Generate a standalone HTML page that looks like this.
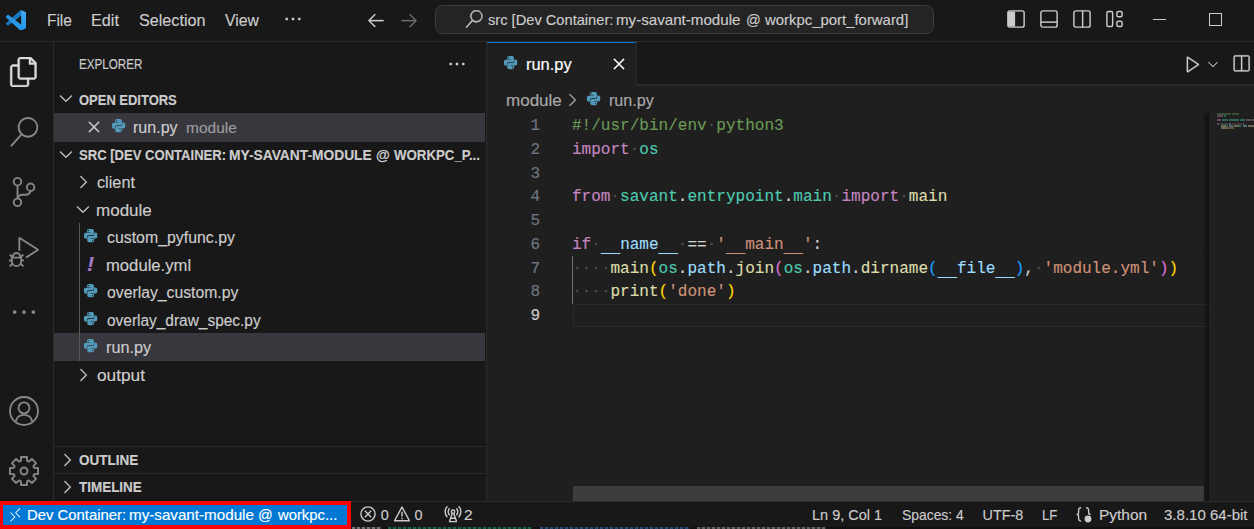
<!DOCTYPE html>
<html lang="en"><head><meta charset="utf-8"><title>run.py - src [Dev Container: my-savant-module @ workpc_port_forward] - Visual Studio Code</title>
<style>
html,body{margin:0;padding:0;background:#181818;overflow:hidden}
span,.code,.ln{-webkit-text-stroke:0.15px currentColor}
body{width:1254px;height:529px;position:relative;font-family:"Liberation Sans",sans-serif;color:#ccc;overflow:hidden}
#app{position:absolute;left:0;top:0;width:1254px;height:529px;overflow:hidden;background:#181818}
.code{position:absolute;white-space:pre;font-family:"Liberation Mono",monospace;font-size:16.04px;line-height:24px;height:24px;color:#d4d4d4}
.ws{background:radial-gradient(circle at 50% 44.5%,#474747 0,#474747 1px,rgba(71,71,71,0) 1.700px)}
.u{position:relative;top:2.500px}.k{color:#c586c0}.m{color:#4ec9b0}.f{color:#dcdcaa}.v{color:#9cdcfe}.s{color:#ce9178}.c{color:#6a9955}
.b1{color:#ffd700}.b2{color:#da70d6}.b3{color:#179fff}
.ln{position:absolute;font-family:"Liberation Mono",monospace;font-size:16.04px;line-height:24px;height:24px;color:#6e7681;text-align:right;width:40px}
</style></head><body><div id="app">
<div style="position:absolute;left:0px;top:0px;width:1254px;height:529px;background:#181818;"></div><div style="position:absolute;left:0px;top:41px;width:1254px;height:1px;background:#2b2b2b;"></div><div style="position:absolute;left:53px;top:42px;width:1px;height:459px;background:#2b2b2b;"></div><div style="position:absolute;left:487px;top:42px;width:767px;height:459px;background:#1f1f1f;"></div><div style="position:absolute;left:486px;top:42px;width:1px;height:459px;background:#2b2b2b;"></div><div style="position:absolute;left:487px;top:42px;width:767px;height:43px;background:#181818;"></div><div style="position:absolute;left:487px;top:84px;width:767px;height:2px;background:#292929;"></div><div style="position:absolute;left:487px;top:42px;width:150px;height:44px;background:#1f1f1f;"></div><div style="position:absolute;left:487px;top:42px;width:150px;height:1.25px;background:#0078d4;"></div><div style="position:absolute;left:636px;top:42px;width:1px;height:43.5px;background:#2b2b2b;"></div><svg style="position:absolute;left:5.9px;top:9.8px;" width="20.4" height="20.4" viewBox="0 0 100 100"><defs><linearGradient id="vsg" x1="0" y1="0" x2="0" y2="1"><stop offset="0" stop-color="#45aef5"/><stop offset="1" stop-color="#1f95ec"/></linearGradient></defs><path d="M96.5 10.8 75.9.9a6.200 6.200 0 0 0-7.100 1.200L29.400 38 12.200 25a4.200 4.200 0 0 0-5.300.200L1.400 30.300a4.200 4.200 0 0 0 0 6.200L16.300 50 1.400 63.600a4.200 4.200 0 0 0 0 6.200l5.500 5a4.200 4.200 0 0 0 5.300.200l17.200-13 39.400 36a6.200 6.200 0 0 0 7.100 1.200l20.600-9.900a6.200 6.200 0 0 0 3.500-5.600V16.400a6.200 6.200 0 0 0-3.500-5.600zM75 72.700 45.100 50 75 27.300z" fill="#1b79be" fill-rule="evenodd"/><path d="M1.400 30.300 6.900 25.200a4.200 4.200 0 0 1 5.300-.200L75 72.700V99.300a6.200 6.200 0 0 1-6.200-1.400L1.400 36.500a4.200 4.200 0 0 1 0-6.200z" fill="#2a97e6"/><path d="M75 0.900 96.500 10.800a6.200 6.200 0 0 1 3.500 5.600V83.600a6.200 6.200 0 0 1-3.500 5.600L75.900 99.100a6.200 6.200 0 0 1-.9.300z" fill="url(#vsg)"/></svg><span style="position:absolute;left:47.26px;top:6.00px;line-height:30px;height:30px;white-space:pre;font-family:'Liberation Sans',sans-serif;font-size:15.6px;color:#cccccc;transform:scaleX(0.9892);transform-origin:0 0;">File</span><span style="position:absolute;left:90.95px;top:6.00px;line-height:30px;height:30px;white-space:pre;font-family:'Liberation Sans',sans-serif;font-size:15.6px;color:#cccccc;transform:scaleX(1.0392);transform-origin:0 0;">Edit</span><span style="position:absolute;left:138.72px;top:6.00px;line-height:30px;height:30px;white-space:pre;font-family:'Liberation Sans',sans-serif;font-size:15.6px;color:#cccccc;transform:scaleX(1.0360);transform-origin:0 0;">Selection</span><span style="position:absolute;left:225.00px;top:6.00px;line-height:30px;height:30px;white-space:pre;font-family:'Liberation Sans',sans-serif;font-size:15.6px;color:#cccccc;transform:scaleX(1.0075);transform-origin:0 0;">View</span><svg style="position:absolute;left:282.75px;top:8.75px;" width="20" height="20" viewBox="0 0 16 16"><path d="M4 8a1 1 0 1 1-2 0 1 1 0 0 1 2 0zm5 0a1 1 0 1 1-2 0 1 1 0 0 1 2 0zm5 0a1 1 0 1 1-2 0 1 1 0 0 1 2 0z" fill="#cccccc" stroke="#cccccc" stroke-width="0.220"/></svg><svg style="position:absolute;left:366.25px;top:9.5px;" width="20" height="20" viewBox="0 0 16 16"><path d="M7 3.093l-5 5V8.8l5 5 .707-.707-4.146-4.147H14v-1H3.56L7.708 3.8 7 3.093z" fill="#cccccc" stroke="#cccccc" stroke-width="0.220"/></svg><svg style="position:absolute;left:399.25px;top:9.5px;" width="20" height="20" viewBox="0 0 16 16"><path d="M9 13.887l5-5V8.18l-5-5-.707.707 4.146 4.147H2v1h10.44L8.292 13.18l.707.707z" fill="#6e6e6e" stroke="#6e6e6e" stroke-width="0.220"/></svg><div style="position:absolute;left:435px;top:5px;width:497px;height:26.5px;background:#242424;border:1px solid #3c3c3c;border-radius:7.5px;box-sizing:content-box"></div><svg style="position:absolute;left:464.5px;top:9.6px;" width="18" height="18" viewBox="0 0 24 24"><path d="M15.25 0a8.25 8.25 0 0 0-6.18 13.72L1 22.88l1.12 1.12 8.05-9.12A8.251 8.251 0 1 0 15.25.01V0zm0 15a6.75 6.75 0 1 1 0-13.5 6.75 6.75 0 0 1 0 13.5z" fill="#c4c4c4" stroke="#c4c4c4" stroke-width="0.500"/></svg><span style="position:absolute;left:488.21px;top:5.00px;line-height:30px;height:30px;white-space:pre;font-family:'Liberation Sans',sans-serif;font-size:15.0px;color:#cccccc;transform:scaleX(0.9763);transform-origin:0 0;">src [Dev Container: </span><span style="position:absolute;left:616.19px;top:5.00px;line-height:30px;height:30px;white-space:pre;font-family:'Liberation Sans',sans-serif;font-size:15.0px;color:#cccccc;transform:scaleX(1.0086);transform-origin:0 0;">my-savant-module </span><span style="position:absolute;left:745.78px;top:5.00px;line-height:30px;height:30px;white-space:pre;font-family:'Liberation Sans',sans-serif;font-size:15.0px;color:#cccccc;transform:scaleX(0.9725);transform-origin:0 0;">@ </span><span style="position:absolute;left:765.40px;top:5.00px;line-height:30px;height:30px;white-space:pre;font-family:'Liberation Sans',sans-serif;font-size:15.0px;color:#cccccc;transform:scaleX(0.9934);transform-origin:0 0;">workpc_port_forward]</span><svg style="position:absolute;left:1006.3px;top:9px;" width="20" height="20" viewBox="0 0 16 16"><g fill="none" stroke="#cccccc" stroke-width="1.150"><rect x="1.5" y="1.500" width="13" height="13" rx="1.500"/><path d="M1.500 2v12h5.800v-12z" fill="#ccc" stroke="none"/></g></svg><svg style="position:absolute;left:1039.1px;top:9px;" width="20" height="20" viewBox="0 0 16 16"><g fill="none" stroke="#cccccc" stroke-width="1.150"><rect x="1.500" y="1.500" width="13" height="13" rx="1.500"/><path d="M1.500 10.500h13"/></g></svg><svg style="position:absolute;left:1071.5px;top:9px;" width="20" height="20" viewBox="0 0 16 16"><g fill="none" stroke="#cccccc" stroke-width="1.150"><rect x="1.500" y="1.500" width="13" height="13" rx="1.500"/><path d="M8.500 1.500v13"/></g></svg><svg style="position:absolute;left:1104.6px;top:9px;" width="20" height="20" viewBox="0 0 16 16"><g fill="none" stroke="#cccccc" stroke-width="1.150"><rect x="1.500" y="2" width="4.600" height="12" rx="1.200"/><rect x="9.500" y="2" width="4.200" height="4.200" rx="1.200"/><rect x="9.500" y="9.800" width="4.200" height="4.200" rx="1.200"/></g></svg><div style="position:absolute;left:1153px;top:19px;width:13px;height:1px;background:#cccccc;"></div><div style="position:absolute;left:1209px;top:13px;width:11px;height:11px;background:transparent;border:1px solid #ccc;box-sizing:content-box"></div><svg style="position:absolute;left:9px;top:57px;" width="30" height="30" viewBox="0 0 24 24"><path d="M17.5 0h-9L7 1.5V6H2.5L1 7.5v15.07L2.5 24h12.07L16 22.57V18h4.7l1.3-1.43V4.5L17.5 0zm0 2.12l2.38 2.38H17.5V2.12zm-3 20.38h-12v-15H7v9.07L8.5 18h6v4.5zm6-6h-12v-15H16V6h4.5v10.5z" fill="#dcdcdc" stroke="#dcdcdc" stroke-width="0.35"/></svg><svg style="position:absolute;left:9px;top:117px;" width="30" height="30" viewBox="0 0 24 24"><path d="M15.25 0a8.25 8.25 0 0 0-6.18 13.72L1 22.88l1.12 1.12 8.05-9.12A8.251 8.251 0 1 0 15.25.01V0zm0 15a6.75 6.75 0 1 1 0-13.5 6.75 6.75 0 0 1 0 13.5z" fill="#868686" /></svg><svg style="position:absolute;left:9px;top:177px;" width="30" height="30" viewBox="0 0 24 24"><path d="M21.007 8.222A3.738 3.738 0 0 0 15.045 5.2a3.737 3.737 0 0 0 1.156 6.583 2.988 2.988 0 0 1-2.668 1.67h-2.99a4.456 4.456 0 0 0-2.989 1.165V7.4a3.737 3.737 0 1 0-1.494 0v9.117a3.776 3.776 0 1 0 1.816.099 2.99 2.99 0 0 1 2.668-1.667h2.99a4.484 4.484 0 0 0 4.223-3.039 3.736 3.736 0 0 0 3.25-3.687zM4.565 3.738a2.242 2.242 0 1 1 4.484 0 2.242 2.242 0 0 1-4.484 0zm4.484 16.441a2.242 2.242 0 1 1-4.484 0 2.242 2.242 0 0 1 4.484 0zm8.221-9.715a2.242 2.242 0 1 1 0-4.485 2.242 2.242 0 0 1 0 4.485z" fill="#868686" /></svg><svg style="position:absolute;left:9px;top:237px;" width="30" height="30" viewBox="0 0 24 24"><path d="M10.94 13.5l-1.32 1.32a3.730 3.730 0 0 0-7.240 0L1.060 13.500 0 14.560l1.720 1.720-.220.220V18H0v1.500h1.500v.080c.077.489.214.966.410 1.420L0 22.940 1.060 24l1.650-1.650A4.308 4.308 0 0 0 6 24a4.310 4.310 0 0 0 3.290-1.650L10.940 24 12 22.940 10.090 21c.198-.464.336-.951.410-1.450v-.100H12V18h-1.500v-1.500l-.220-.220L12 14.560l-1.060-1.060zM6 13.500a2.250 2.250 0 0 1 2.250 2.250h-4.500A2.250 2.250 0 0 1 6 13.500zm3 6a3.330 3.330 0 0 1-3 3 3.330 3.330 0 0 1-3-3v-2.250h6v2.250zm14.760-9.900v1.260L13.500 17.370V15.600l8.500-5.370L9 2v9.460a5.070 5.070 0 0 0-1.500-.720V.630L8.640 0l15.120 9.600z" fill="#868686" /></svg><svg style="position:absolute;left:9px;top:297px;" width="30" height="30" viewBox="0 0 16 16"><path d="M4 8a1 1 0 1 1-2 0 1 1 0 0 1 2 0zm5 0a1 1 0 1 1-2 0 1 1 0 0 1 2 0zm5 0a1 1 0 1 1-2 0 1 1 0 0 1 2 0z" fill="#868686" /></svg><svg style="position:absolute;left:9px;top:396px;" width="30" height="30" viewBox="0 0 24 24"><g fill="none" stroke="#868686" stroke-width="1.500"><circle cx="12" cy="12" r="11.200"/><circle cx="12" cy="9.500" r="4.400"/><path d="M5.400 20.600c.600-3.600 3.300-5.500 6.600-5.500s6 1.900 6.600 5.500"/></g></svg><svg style="position:absolute;left:9px;top:456px;" width="30" height="30" viewBox="0 0 24 24"><g fill="none" stroke="#868686" stroke-width="1.550" stroke-linejoin="round"><path d="M9.49 3.88 L9.66 0.74 L14.34 0.74 L14.51 3.88 L15.97 4.48 L18.31 2.38 L21.62 5.69 L19.52 8.03 L20.12 9.49 L23.26 9.66 L23.26 14.34 L20.12 14.51 L19.52 15.97 L21.62 18.31 L18.31 21.62 L15.97 19.52 L14.51 20.12 L14.34 23.26 L9.66 23.26 L9.49 20.12 L8.03 19.52 L5.69 21.62 L2.38 18.31 L4.48 15.97 L3.88 14.51 L0.74 14.34 L0.74 9.66 L3.88 9.49 L4.48 8.03 L2.38 5.69 L5.69 2.38 L8.03 4.48Z"/><circle cx="12" cy="12" r="2.800"/></g></svg><span style="position:absolute;left:78.87px;top:49.00px;line-height:30px;height:30px;white-space:pre;font-family:'Liberation Sans',sans-serif;font-size:14px;color:#cccccc;transform:scaleX(0.8309);transform-origin:0 0;">EXPLORER</span><svg style="position:absolute;left:446.75px;top:54px;" width="20" height="20" viewBox="0 0 16 16"><path d="M4 8a1 1 0 1 1-2 0 1 1 0 0 1 2 0zm5 0a1 1 0 1 1-2 0 1 1 0 0 1 2 0zm5 0a1 1 0 1 1-2 0 1 1 0 0 1 2 0z" fill="#cccccc" stroke="#cccccc" stroke-width="0.220"/></svg><svg style="position:absolute;left:56.4px;top:88.4px;" width="20" height="20" viewBox="0 0 16 16"><path d="M7.976 10.072l4.357-4.357.62.618L8.284 11h-.618L3 6.333l.619-.618 4.357 4.357z" fill="#cccccc" stroke="#cccccc" stroke-width="0.220"/></svg><span style="position:absolute;left:79.04px;top:85.00px;line-height:30px;height:30px;white-space:pre;font-family:'Liberation Sans',sans-serif;font-size:14px;color:#cccccc;font-weight:700;transform:scaleX(0.9263);transform-origin:0 0;">OPEN EDITORS</span><div style="position:absolute;left:54px;top:113px;width:431px;height:28.5px;background:#37373d;"></div><svg style="position:absolute;left:84px;top:117.2px;" width="20" height="20" viewBox="0 0 16 16"><path d="M8 8.707l3.646 3.647.708-.707L8.707 8l3.647-3.646-.707-.708L8 7.293 4.354 3.646l-.707.708L7.293 8l-3.646 3.646.707.708L8 8.707z" fill="#cccccc" stroke="#cccccc" stroke-width="0.220"/></svg><svg style="position:absolute;left:111.0px;top:118.2px;" width="15.2" height="15.2" viewBox="0 0 16 16"><path d="M4.300 2.800Q4.300 1 6.200 1H9.600Q11.500 1 11.500 2.800V6Q11.500 7.650 9.700 7.650H6.100Q4.100 7.650 4.100 9.500V11.200H2.800Q1 11.200 1 9.300V6.700Q1 4.900 2.800 4.900H8V4.350H4.300ZM5.900 2.100a.650.650 0 1 1 0 1.300.650.650 0 0 1 0-1.300z" fill="#519aba" fill-rule="evenodd"/><g transform="rotate(180 8 8)"><path d="M4.300 2.800Q4.300 1 6.200 1H9.600Q11.500 1 11.500 2.800V6Q11.500 7.650 9.700 7.650H6.100Q4.100 7.650 4.100 9.500V11.200H2.800Q1 11.200 1 9.300V6.700Q1 4.900 2.800 4.900H8V4.350H4.300ZM5.900 2.100a.650.650 0 1 1 0 1.300.650.650 0 0 1 0-1.300z" fill="#519aba" fill-rule="evenodd"/></g></svg><span style="position:absolute;left:133.47px;top:113.00px;line-height:30px;height:30px;white-space:pre;font-family:'Liberation Sans',sans-serif;font-size:15.6px;color:#cccccc;transform:scaleX(1.0296);transform-origin:0 0;">run.py</span><span style="position:absolute;left:185.92px;top:113.00px;line-height:30px;height:30px;white-space:pre;font-family:'Liberation Sans',sans-serif;font-size:14.4px;color:#9d9d9d;transform:scaleX(1.0769);transform-origin:0 0;">module</span><svg style="position:absolute;left:56.4px;top:144.1px;" width="20" height="20" viewBox="0 0 16 16"><path d="M7.976 10.072l4.357-4.357.62.618L8.284 11h-.618L3 6.333l.619-.618 4.357 4.357z" fill="#cccccc" stroke="#cccccc" stroke-width="0.220"/></svg><span style="position:absolute;left:78.93px;top:140.00px;line-height:30px;height:30px;white-space:pre;font-family:'Liberation Sans',sans-serif;font-size:14px;color:#cccccc;font-weight:700;transform:scaleX(0.9329);transform-origin:0 0;">SRC [DEV CONTAINER: </span><span style="position:absolute;left:229.12px;top:140.00px;line-height:30px;height:30px;white-space:pre;font-family:'Liberation Sans',sans-serif;font-size:14px;color:#cccccc;font-weight:700;transform:scaleX(0.9847);transform-origin:0 0;">MY-SAVANT-MODULE </span><span style="position:absolute;left:375.64px;top:140.00px;line-height:30px;height:30px;white-space:pre;font-family:'Liberation Sans',sans-serif;font-size:14px;color:#cccccc;font-weight:700;transform:scaleX(1.0122);transform-origin:0 0;">@ </span><span style="position:absolute;left:394.20px;top:140.00px;line-height:30px;height:30px;white-space:pre;font-family:'Liberation Sans',sans-serif;font-size:14px;color:#cccccc;font-weight:700;transform:scaleX(0.9471);transform-origin:0 0;">WORKPC_P...</span><div style="position:absolute;left:54px;top:333.25px;width:431px;height:27.75px;background:#37373d;"></div><div style="position:absolute;left:79px;top:223px;width:1px;height:138px;background:#585858;"></div><svg style="position:absolute;left:72.5px;top:172.2px;" width="20" height="20" viewBox="0 0 16 16"><path d="M10.072 8.024L5.715 3.667l.618-.62L11 7.716v.618L6.333 13l-.618-.619 4.357-4.357z" fill="#cccccc" stroke="#cccccc" stroke-width="0.220"/></svg><span style="position:absolute;left:96.98px;top:168.00px;line-height:30px;height:30px;white-space:pre;font-family:'Liberation Sans',sans-serif;font-size:15.6px;color:#cccccc;transform:scaleX(1.0420);transform-origin:0 0;">client</span><svg style="position:absolute;left:72.5px;top:199.0px;" width="20" height="20" viewBox="0 0 16 16"><path d="M7.976 10.072l4.357-4.357.62.618L8.284 11h-.618L3 6.333l.619-.618 4.357 4.357z" fill="#cccccc" stroke="#cccccc" stroke-width="0.220"/></svg><span style="position:absolute;left:95.91px;top:196.00px;line-height:30px;height:30px;white-space:pre;font-family:'Liberation Sans',sans-serif;font-size:15.6px;color:#cccccc;transform:scaleX(1.0909);transform-origin:0 0;">module</span><svg style="position:absolute;left:83.4px;top:228.20000000000002px;" width="15.2" height="15.2" viewBox="0 0 16 16"><path d="M4.300 2.800Q4.300 1 6.200 1H9.600Q11.500 1 11.500 2.800V6Q11.500 7.650 9.700 7.650H6.100Q4.100 7.650 4.100 9.500V11.200H2.800Q1 11.200 1 9.300V6.700Q1 4.900 2.800 4.900H8V4.350H4.300ZM5.900 2.100a.650.650 0 1 1 0 1.300.650.650 0 0 1 0-1.300z" fill="#519aba" fill-rule="evenodd"/><g transform="rotate(180 8 8)"><path d="M4.300 2.800Q4.300 1 6.200 1H9.600Q11.500 1 11.500 2.800V6Q11.500 7.650 9.700 7.650H6.100Q4.100 7.650 4.100 9.500V11.200H2.800Q1 11.200 1 9.300V6.700Q1 4.900 2.800 4.900H8V4.350H4.300ZM5.900 2.100a.650.650 0 1 1 0 1.300.650.650 0 0 1 0-1.300z" fill="#519aba" fill-rule="evenodd"/></g></svg><span style="position:absolute;left:106.99px;top:223.00px;line-height:30px;height:30px;white-space:pre;font-family:'Liberation Sans',sans-serif;font-size:15.6px;color:#cccccc;transform:scaleX(1.0180);transform-origin:0 0;">custom_pyfunc.py</span><span style="position:absolute;left:87.38px;top:249.00px;line-height:30px;height:30px;white-space:pre;font-family:'Liberation Sans',sans-serif;font-size:19.5px;color:#a679cc;font-weight:700;transform:scaleX(1.0909);transform-origin:0 0;font-style:italic;">!</span><span style="position:absolute;left:105.93px;top:251.00px;line-height:30px;height:30px;white-space:pre;font-family:'Liberation Sans',sans-serif;font-size:15.6px;color:#cccccc;transform:scaleX(1.0675);transform-origin:0 0;">module.yml</span><svg style="position:absolute;left:83.4px;top:283.2px;" width="15.2" height="15.2" viewBox="0 0 16 16"><path d="M4.300 2.800Q4.300 1 6.200 1H9.600Q11.500 1 11.500 2.800V6Q11.500 7.650 9.700 7.650H6.100Q4.100 7.650 4.100 9.500V11.200H2.800Q1 11.200 1 9.300V6.700Q1 4.900 2.800 4.900H8V4.350H4.300ZM5.900 2.100a.650.650 0 1 1 0 1.300.650.650 0 0 1 0-1.300z" fill="#519aba" fill-rule="evenodd"/><g transform="rotate(180 8 8)"><path d="M4.300 2.800Q4.300 1 6.200 1H9.600Q11.500 1 11.500 2.800V6Q11.500 7.650 9.700 7.650H6.100Q4.100 7.650 4.100 9.500V11.200H2.800Q1 11.200 1 9.300V6.700Q1 4.900 2.800 4.900H8V4.350H4.300ZM5.900 2.100a.650.650 0 1 1 0 1.300.650.650 0 0 1 0-1.300z" fill="#519aba" fill-rule="evenodd"/></g></svg><span style="position:absolute;left:107.00px;top:278.00px;line-height:30px;height:30px;white-space:pre;font-family:'Liberation Sans',sans-serif;font-size:15.6px;color:#cccccc;transform:scaleX(1.0097);transform-origin:0 0;">overlay_custom.py</span><svg style="position:absolute;left:83.4px;top:310.7px;" width="15.2" height="15.2" viewBox="0 0 16 16"><path d="M4.300 2.800Q4.300 1 6.200 1H9.600Q11.500 1 11.500 2.800V6Q11.500 7.650 9.700 7.650H6.100Q4.100 7.650 4.100 9.500V11.200H2.800Q1 11.200 1 9.300V6.700Q1 4.900 2.800 4.900H8V4.350H4.300ZM5.900 2.100a.650.650 0 1 1 0 1.300.650.650 0 0 1 0-1.300z" fill="#519aba" fill-rule="evenodd"/><g transform="rotate(180 8 8)"><path d="M4.300 2.800Q4.300 1 6.200 1H9.600Q11.500 1 11.500 2.800V6Q11.500 7.650 9.700 7.650H6.100Q4.100 7.650 4.100 9.500V11.200H2.800Q1 11.200 1 9.300V6.700Q1 4.900 2.800 4.900H8V4.350H4.300ZM5.900 2.100a.650.650 0 1 1 0 1.300.650.650 0 0 1 0-1.300z" fill="#519aba" fill-rule="evenodd"/></g></svg><span style="position:absolute;left:106.50px;top:306.00px;line-height:30px;height:30px;white-space:pre;font-family:'Liberation Sans',sans-serif;font-size:15.6px;color:#cccccc;transform:scaleX(0.9903);transform-origin:0 0;">overlay_draw_spec.py</span><svg style="position:absolute;left:83.4px;top:338.2px;" width="15.2" height="15.2" viewBox="0 0 16 16"><path d="M4.300 2.800Q4.300 1 6.200 1H9.600Q11.500 1 11.500 2.800V6Q11.500 7.650 9.700 7.650H6.100Q4.100 7.650 4.100 9.500V11.200H2.800Q1 11.200 1 9.300V6.700Q1 4.900 2.800 4.900H8V4.350H4.300ZM5.900 2.100a.650.650 0 1 1 0 1.300.650.650 0 0 1 0-1.300z" fill="#519aba" fill-rule="evenodd"/><g transform="rotate(180 8 8)"><path d="M4.300 2.800Q4.300 1 6.200 1H9.600Q11.500 1 11.500 2.800V6Q11.500 7.650 9.700 7.650H6.100Q4.100 7.650 4.100 9.500V11.200H2.800Q1 11.200 1 9.300V6.700Q1 4.900 2.800 4.900H8V4.350H4.300ZM5.900 2.100a.650.650 0 1 1 0 1.300.650.650 0 0 1 0-1.300z" fill="#519aba" fill-rule="evenodd"/></g></svg><span style="position:absolute;left:105.96px;top:333.00px;line-height:30px;height:30px;white-space:pre;font-family:'Liberation Sans',sans-serif;font-size:15.6px;color:#cccccc;transform:scaleX(1.0414);transform-origin:0 0;">run.py</span><svg style="position:absolute;left:72.5px;top:364.7px;" width="20" height="20" viewBox="0 0 16 16"><path d="M10.072 8.024L5.715 3.667l.618-.62L11 7.716v.618L6.333 13l-.618-.619 4.357-4.357z" fill="#cccccc" stroke="#cccccc" stroke-width="0.220"/></svg><span style="position:absolute;left:96.95px;top:361.00px;line-height:30px;height:30px;white-space:pre;font-family:'Liberation Sans',sans-serif;font-size:15.6px;color:#cccccc;transform:scaleX(1.1053);transform-origin:0 0;">output</span><div style="position:absolute;left:54px;top:446px;width:432px;height:1px;background:#2b2b2b;"></div><div style="position:absolute;left:54px;top:473px;width:432px;height:1px;background:#2b2b2b;"></div><svg style="position:absolute;left:56.6px;top:449.8px;" width="20" height="20" viewBox="0 0 16 16"><path d="M10.072 8.024L5.715 3.667l.618-.62L11 7.716v.618L6.333 13l-.618-.619 4.357-4.357z" fill="#cccccc" stroke="#cccccc" stroke-width="0.220"/></svg><span style="position:absolute;left:78.77px;top:445.00px;line-height:30px;height:30px;white-space:pre;font-family:'Liberation Sans',sans-serif;font-size:14px;color:#cccccc;font-weight:700;transform:scaleX(0.9628);transform-origin:0 0;">OUTLINE</span><svg style="position:absolute;left:56.6px;top:477.3px;" width="20" height="20" viewBox="0 0 16 16"><path d="M10.072 8.024L5.715 3.667l.618-.62L11 7.716v.618L6.333 13l-.618-.619 4.357-4.357z" fill="#cccccc" stroke="#cccccc" stroke-width="0.220"/></svg><span style="position:absolute;left:79.25px;top:472.00px;line-height:30px;height:30px;white-space:pre;font-family:'Liberation Sans',sans-serif;font-size:14px;color:#cccccc;font-weight:700;transform:scaleX(0.9614);transform-origin:0 0;">TIMELINE</span><svg style="position:absolute;left:503.29999999999995px;top:55.3px;" width="15.2" height="15.2" viewBox="0 0 16 16"><path d="M4.300 2.800Q4.300 1 6.200 1H9.600Q11.500 1 11.500 2.800V6Q11.500 7.650 9.700 7.650H6.100Q4.100 7.650 4.100 9.500V11.200H2.800Q1 11.200 1 9.300V6.700Q1 4.900 2.800 4.900H8V4.350H4.300ZM5.900 2.100a.650.650 0 1 1 0 1.300.650.650 0 0 1 0-1.300z" fill="#519aba" fill-rule="evenodd"/><g transform="rotate(180 8 8)"><path d="M4.300 2.800Q4.300 1 6.200 1H9.600Q11.500 1 11.500 2.800V6Q11.500 7.650 9.700 7.650H6.100Q4.100 7.650 4.100 9.500V11.200H2.800Q1 11.200 1 9.300V6.700Q1 4.900 2.800 4.900H8V4.350H4.300ZM5.900 2.100a.650.650 0 1 1 0 1.300.650.650 0 0 1 0-1.300z" fill="#519aba" fill-rule="evenodd"/></g></svg><span style="position:absolute;left:525.70px;top:50.00px;line-height:30px;height:30px;white-space:pre;font-family:'Liberation Sans',sans-serif;font-size:15.6px;color:#ffffff;transform:scaleX(1.0533);transform-origin:0 0;">run.py</span><svg style="position:absolute;left:608.5px;top:54.1px;" width="20" height="20" viewBox="0 0 16 16"><path d="M8 8.707l3.646 3.647.708-.707L8.707 8l3.647-3.646-.707-.708L8 7.293 4.354 3.646l-.707.708L7.293 8l-3.646 3.646.707.708L8 8.707z" fill="#ffffff" stroke="#ffffff" stroke-width="0.220"/></svg><svg style="position:absolute;left:1183px;top:54px;" width="20" height="20" viewBox="0 0 16 16"><path d="M3.78 2L3 2.41v12l.78.42 9-6V8l-9-6zM4 13.48V3.35l7.600 5.070L4 13.480z" fill="#cccccc" stroke="#cccccc" stroke-width="0.220"/></svg><svg style="position:absolute;left:1205.3px;top:55.5px;" width="16" height="16" viewBox="0 0 16 16"><path d="M7.976 10.072l4.357-4.357.62.618L8.284 11h-.618L3 6.333l.619-.618 4.357 4.357z" fill="#cccccc" /></svg><svg style="position:absolute;left:1231.2px;top:54px;" width="20" height="20" viewBox="0 0 16 16"><path d="M14 1H3L2 2v11l1 1h11l1-1V2l-1-1zM8 13H3V2h5v11zm6 0H9V2h5v11z" fill="#cccccc" stroke="#cccccc" stroke-width="0.220"/></svg><span style="position:absolute;left:505.71px;top:86.00px;line-height:30px;height:30px;white-space:pre;font-family:'Liberation Sans',sans-serif;font-size:15.6px;color:#a9a9a9;transform:scaleX(1.0909);transform-origin:0 0;">module</span><svg style="position:absolute;left:562px;top:90px;" width="20" height="20" viewBox="0 0 16 16"><path d="M10.072 8.024L5.715 3.667l.618-.62L11 7.716v.618L6.333 13l-.618-.619 4.357-4.357z" fill="#a9a9a9" stroke="#a9a9a9" stroke-width="0.220"/></svg><svg style="position:absolute;left:585.6999999999999px;top:91.4px;" width="15.2" height="15.2" viewBox="0 0 16 16"><path d="M4.300 2.800Q4.300 1 6.200 1H9.600Q11.500 1 11.500 2.800V6Q11.500 7.650 9.700 7.650H6.100Q4.100 7.650 4.100 9.500V11.200H2.800Q1 11.200 1 9.300V6.700Q1 4.900 2.800 4.900H8V4.350H4.300ZM5.900 2.100a.650.650 0 1 1 0 1.300.650.650 0 0 1 0-1.300z" fill="#519aba" fill-rule="evenodd"/><g transform="rotate(180 8 8)"><path d="M4.300 2.800Q4.300 1 6.200 1H9.600Q11.500 1 11.500 2.800V6Q11.500 7.650 9.700 7.650H6.100Q4.100 7.650 4.100 9.500V11.200H2.800Q1 11.200 1 9.300V6.700Q1 4.900 2.800 4.900H8V4.350H4.300ZM5.900 2.100a.650.650 0 1 1 0 1.300.650.650 0 0 1 0-1.300z" fill="#519aba" fill-rule="evenodd"/></g></svg><span style="position:absolute;left:608.57px;top:86.00px;line-height:30px;height:30px;white-space:pre;font-family:'Liberation Sans',sans-serif;font-size:15.6px;color:#a9a9a9;transform:scaleX(1.0343);transform-origin:0 0;">run.py</span><div style="position:absolute;left:572.5px;top:303.5px;width:637px;height:21.5px;background:transparent;border:1.250px solid #2a2a2a;border-right:none;box-sizing:content-box"></div><div style="position:absolute;left:572.25px;top:255.5px;width:1px;height:48px;background:#707070;"></div><div class="ln" style="left:500px;top:114.00px;color:#6e7681">1</div><div class="code" style="left:572px;top:114.00px"><span class="c">#!/usr/bin/env<span class="ws"> </span>python3</span></div><div class="ln" style="left:500px;top:138.00px;color:#6e7681">2</div><div class="code" style="left:572px;top:138.00px"><span class="k">import</span><span class="ws"> </span><span class="m">os</span></div><div class="ln" style="left:500px;top:162.00px;color:#6e7681">3</div><div class="ln" style="left:500px;top:185.00px;color:#6e7681">4</div><div class="code" style="left:572px;top:185.00px"><span class="k">from</span><span class="ws"> </span><span class="m">savant</span>.<span class="m">entrypoint</span>.<span class="m">main</span><span class="ws"> </span><span class="k">import</span><span class="ws"> </span><span class="f">main</span></div><div class="ln" style="left:500px;top:209.00px;color:#6e7681">5</div><div class="ln" style="left:500px;top:233.00px;color:#6e7681">6</div><div class="code" style="left:572px;top:233.00px"><span class="k">if</span><span class="ws"> </span><span class="v"><span class="u">__</span>name<span class="u">__</span></span><span class="ws"> </span>==<span class="ws"> </span><span class="s">'<span class="u">__</span>main<span class="u">__</span>'</span>:</div><div class="ln" style="left:500px;top:257.00px;color:#6e7681">7</div><div class="code" style="left:572px;top:257.00px"><span class="ws"> </span><span class="ws"> </span><span class="ws"> </span><span class="ws"> </span><span class="f">main</span><span class="b1">(</span><span class="m">os</span>.<span class="v">path</span>.<span class="f">join</span><span class="b2">(</span><span class="m">os</span>.<span class="v">path</span>.<span class="f">dirname</span><span class="b3">(</span><span class="v"><span class="u">__</span>file<span class="u">__</span></span><span class="b3">)</span>,<span class="ws"> </span><span class="s">'module.yml'</span><span class="b2">)</span><span class="b1">)</span></div><div class="ln" style="left:500px;top:280.00px;color:#6e7681">8</div><div class="code" style="left:572px;top:280.00px"><span class="ws"> </span><span class="ws"> </span><span class="ws"> </span><span class="ws"> </span><span class="f">print</span><span class="b1">(</span><span class="s">'done'</span><span class="b1">)</span></div><div class="ln" style="left:500px;top:304.00px;color:#cccccc">9</div><div style="position:absolute;left:572.5px;top:486px;width:631px;height:15px;background:#3d3d3d;"></div><div style="position:absolute;left:1202px;top:113px;width:7px;height:388px;background:linear-gradient(to right,rgba(0,0,0,0),rgba(0,0,0,0.500));"></div><div style="position:absolute;left:1217.0px;top:113.0px;width:14.28px;height:2px;background:#6a9955;opacity:0.4"></div><div style="position:absolute;left:1232.3px;top:113.0px;width:7.14px;height:2px;background:#6a9955;opacity:0.4"></div><div style="position:absolute;left:1217.0px;top:115.05px;width:6.12px;height:2px;background:#c586c0;opacity:0.4"></div><div style="position:absolute;left:1224.14px;top:115.05px;width:2.04px;height:2px;background:#4ec9b0;opacity:0.4"></div><div style="position:absolute;left:1217.0px;top:119.15px;width:4.08px;height:2px;background:#c586c0;opacity:0.4"></div><div style="position:absolute;left:1222.1px;top:119.15px;width:6.12px;height:2px;background:#4ec9b0;opacity:0.4"></div><div style="position:absolute;left:1229.24px;top:119.15px;width:10.2px;height:2px;background:#4ec9b0;opacity:0.4"></div><div style="position:absolute;left:1240.46px;top:119.15px;width:4.08px;height:2px;background:#4ec9b0;opacity:0.4"></div><div style="position:absolute;left:1245.56px;top:119.15px;width:6.12px;height:2px;background:#c586c0;opacity:0.4"></div><div style="position:absolute;left:1252.7px;top:119.15px;width:1.3px;height:2px;background:#dcdcaa;opacity:0.4"></div><div style="position:absolute;left:1217.0px;top:123.25px;width:2.04px;height:2px;background:#c586c0;opacity:0.4"></div><div style="position:absolute;left:1220.06px;top:123.25px;width:8.16px;height:2px;background:#9cdcfe;opacity:0.2"></div><div style="position:absolute;left:1229.24px;top:123.25px;width:2.04px;height:2px;background:#d4d4d4;opacity:0.4"></div><div style="position:absolute;left:1232.3px;top:123.25px;width:10.2px;height:2px;background:#ce9178;opacity:0.2"></div><div style="position:absolute;left:1242.5px;top:123.25px;width:1.02px;height:2px;background:#d4d4d4;opacity:0.4"></div><div style="position:absolute;left:1221.08px;top:125.3px;width:5.1px;height:2px;background:#dcdcaa;opacity:0.4"></div><div style="position:absolute;left:1226.18px;top:125.3px;width:2.04px;height:2px;background:#4ec9b0;opacity:0.4"></div><div style="position:absolute;left:1229.24px;top:125.3px;width:4.08px;height:2px;background:#9cdcfe;opacity:0.4"></div><div style="position:absolute;left:1234.34px;top:125.3px;width:5.1px;height:2px;background:#dcdcaa;opacity:0.4"></div><div style="position:absolute;left:1239.44px;top:125.3px;width:2.04px;height:2px;background:#4ec9b0;opacity:0.4"></div><div style="position:absolute;left:1242.5px;top:125.3px;width:4.08px;height:2px;background:#9cdcfe;opacity:0.4"></div><div style="position:absolute;left:1247.6px;top:125.3px;width:6.4px;height:2px;background:#dcdcaa;opacity:0.4"></div><div style="position:absolute;left:1221.08px;top:127.35px;width:6.12px;height:2px;background:#dcdcaa;opacity:0.4"></div><div style="position:absolute;left:1227.2px;top:127.35px;width:6.12px;height:2px;background:#ce9178;opacity:0.4"></div><div style="position:absolute;left:1233.32px;top:127.35px;width:1.02px;height:2px;background:#ffd700;opacity:0.4"></div><div style="position:absolute;left:0px;top:501px;width:1254px;height:1px;background:#2b2b2b;"></div><div style="position:absolute;left:0px;top:501px;width:351px;height:28px;background:#ff0000;"></div><div style="position:absolute;left:3px;top:505px;width:344px;height:20px;background:#0078d4;"></div><svg style="position:absolute;left:7.3px;top:506.5px;" width="16.5" height="16.5" viewBox="0 0 16 16"><path d="M12.904 9.570L8.928 5.596l3.976-3.976-.619-.620L8 5.286v.619l4.285 4.285.620-.618zM3 5.620l4.072 4.070L3 13.763l.619.618L8 10v-.619L3.619 5 3 5.619z" fill="#ffffff" /></svg><span style="position:absolute;left:27.41px;top:500.00px;line-height:30px;height:30px;white-space:pre;font-family:'Liberation Sans',sans-serif;font-size:14.4px;color:#ffffff;transform:scaleX(1.0332);transform-origin:0 0;">Dev Container: </span><span style="position:absolute;left:129.44px;top:500.00px;line-height:30px;height:30px;white-space:pre;font-family:'Liberation Sans',sans-serif;font-size:14.4px;color:#ffffff;transform:scaleX(1.0552);transform-origin:0 0;">my-savant-module </span><span style="position:absolute;left:258.49px;top:500.00px;line-height:30px;height:30px;white-space:pre;font-family:'Liberation Sans',sans-serif;font-size:14.4px;color:#ffffff;transform:scaleX(1.0080);transform-origin:0 0;">@ </span><span style="position:absolute;left:277.90px;top:500.00px;line-height:30px;height:30px;white-space:pre;font-family:'Liberation Sans',sans-serif;font-size:14.4px;color:#ffffff;transform:scaleX(1.0293);transform-origin:0 0;">workpc...</span><svg style="position:absolute;left:359.4px;top:505px;" width="18" height="18" viewBox="0 0 16 16"><g fill="none" stroke="#ccc" stroke-width="1.250"><circle cx="8" cy="8" r="6.300"/><path d="M5.200 5.200l5.600 5.600M10.800 5.200l-5.600 5.600"/></g></svg><span style="position:absolute;left:380.75px;top:500.00px;line-height:30px;height:30px;white-space:pre;font-family:'Liberation Sans',sans-serif;font-size:14.4px;color:#cccccc;">0</span><svg style="position:absolute;left:392.9px;top:505px;" width="18" height="18" viewBox="0 0 16 16"><g fill="none" stroke="#ccc" stroke-width="1.250" stroke-linejoin="round"><path d="M8 1.800L14.600 14H1.400z"/><path d="M8 6v4.300M8 11.300v1.300"/></g></svg><span style="position:absolute;left:414.50px;top:500.00px;line-height:30px;height:30px;white-space:pre;font-family:'Liberation Sans',sans-serif;font-size:14.4px;color:#cccccc;">0</span><svg style="position:absolute;left:443.5px;top:505px;" width="18" height="18" viewBox="0 0 16 16"><g fill="none" stroke="#ccc" stroke-width="1.250"><circle cx="8" cy="6" r="1.500"/><path d="M7.300 7.500L4.800 14.800M8.700 7.500L11.200 14.800M5.800 11.800h4.400M4.500 14.800h7"/><path d="M5 9a4.200 4.200 0 0 1 0-6M11 9a4.200 4.200 0 0 0 0-6M3 10.800a6.800 6.800 0 0 1 0-9.600M13 10.800a6.800 6.800 0 0 0 0-9.600"/></g></svg><span style="position:absolute;left:464.19px;top:500.00px;line-height:30px;height:30px;white-space:pre;font-family:'Liberation Sans',sans-serif;font-size:14.4px;color:#cccccc;transform:scaleX(1.0769);transform-origin:0 0;">2</span><span style="position:absolute;left:812.49px;top:500.00px;line-height:30px;height:30px;white-space:pre;font-family:'Liberation Sans',sans-serif;font-size:14.4px;color:#cccccc;transform:scaleX(1.0074);transform-origin:0 0;">Ln 9, Col 1</span><span style="position:absolute;left:902.28px;top:500.00px;line-height:30px;height:30px;white-space:pre;font-family:'Liberation Sans',sans-serif;font-size:14.4px;color:#cccccc;transform:scaleX(0.9643);transform-origin:0 0;">Spaces: 4</span><span style="position:absolute;left:982.50px;top:500.00px;line-height:30px;height:30px;white-space:pre;font-family:'Liberation Sans',sans-serif;font-size:14.4px;color:#cccccc;">UTF-8</span><span style="position:absolute;left:1042.35px;top:500.00px;line-height:30px;height:30px;white-space:pre;font-family:'Liberation Sans',sans-serif;font-size:14.4px;color:#cccccc;transform:scaleX(0.9167);transform-origin:0 0;">LF</span><svg style="position:absolute;left:1076.4px;top:506.6px;" width="18" height="18" viewBox="0 0 18 18"><g fill="none" stroke="#ccc" stroke-width="1.300"><path d="M5.200 0.700c-2 0-2.600 1-2.600 2.500v2.200c0 1.300-.8 2-2 2 1.200 0 2 .7 2 2v2.200c0 1.500.6 2.500 2.600 2.500"/><path d="M10 0.700c2 0 2.600 1 2.600 2.500v2.200c0 1.300.8 2 2 2-1.200 0-2 .7-2 2v1"/></g><circle cx="12" cy="12" r="4.300" fill="#181818"/><circle cx="12" cy="12" r="3.400" fill="#ccc"/></svg><span style="position:absolute;left:1099.15px;top:500.00px;line-height:30px;height:30px;white-space:pre;font-family:'Liberation Sans',sans-serif;font-size:14.4px;color:#cccccc;transform:scaleX(1.0760);transform-origin:0 0;">Python</span><span style="position:absolute;left:1163.73px;top:500.00px;line-height:30px;height:30px;white-space:pre;font-family:'Liberation Sans',sans-serif;font-size:14.4px;color:#cccccc;transform:scaleX(1.0440);transform-origin:0 0;">3.8.10 64-bit</span><div style="position:absolute;left:351px;top:527px;width:903px;height:2px;background:#101010;"></div><div style="position:absolute;left:352px;top:527.4px;width:30px;height:1.6px;background:#c8c8c8;opacity:0.550;background-image:repeating-linear-gradient(90deg,rgba(0,0,0,0) 0 3px,rgba(15,15,15,0.700) 3px 5px)"></div><div style="position:absolute;left:388px;top:527.4px;width:144px;height:1.6px;background:#1fa36b;opacity:0.550;background-image:repeating-linear-gradient(90deg,rgba(0,0,0,0) 0 3px,rgba(15,15,15,0.700) 3px 5px)"></div><div style="position:absolute;left:540px;top:527.4px;width:150px;height:1.6px;background:#3a78c9;opacity:0.550;background-image:repeating-linear-gradient(90deg,rgba(0,0,0,0) 0 3px,rgba(15,15,15,0.700) 3px 5px)"></div><div style="position:absolute;left:697px;top:527.4px;width:129px;height:1.6px;background:#a8a8a8;opacity:0.550;background-image:repeating-linear-gradient(90deg,rgba(0,0,0,0) 0 3px,rgba(15,15,15,0.700) 3px 5px)"></div>
</div></body></html>
